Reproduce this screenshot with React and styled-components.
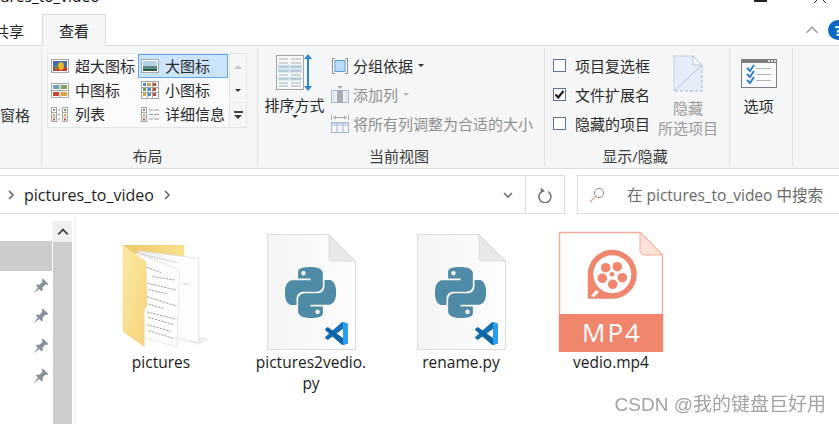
import React from 'react';
import styled, { createGlobalStyle } from 'styled-components';
import { SiPython } from 'react-icons/si';

const GlobalStyle = createGlobalStyle`
  html, body {
    margin: 0;
    padding: 0;
    background: #fff;
  }
  * {
    box-sizing: border-box;
  }
`;

const UI_FONT = `"Open Sans", "Noto Sans CJK SC", sans-serif`;

const Page = styled.div`
  position: relative;
  width: 839px;
  height: 424px;
  overflow: hidden;
  background: #fff;
  color: #222;
  font-family: ${UI_FONT};
  font-size: 15px;
`;

const TitleBar = styled.div`
  display: flex;
  justify-content: space-between;
  height: 14px;
  overflow: hidden;
  font-size: 15.5px;
  line-height: 14px;
  color: #111;
`;

const TitleText = styled.div`
  margin-top: -11px;
`;

const WindowGlyphs = styled.div`
  display: flex;
  align-items: flex-start;
  gap: 46px;
  padding-right: 12px;
`;

const RestoreEdge = styled.span`
  width: 13px;
  height: 2px;
  background: #222;
`;

const TabBar = styled.div`
  display: flex;
  align-items: stretch;
  height: 32px;
  margin-bottom: -1px;
`;

const Tab = styled.div`
  position: relative;
  z-index: 1;
  display: flex;
  flex: none;
  align-items: center;
  justify-content: center;
  width: ${(p) => p.$width}px;
  margin-left: ${(p) => p.$left || 0}px;
  background: ${(p) => (p.$active ? '#f5f6f7' : 'transparent')};
  border: 1px solid ${(p) => (p.$active ? '#d9dadb' : 'transparent')};
  border-bottom: none;
`;

const TabTools = styled.div`
  display: flex;
  align-items: center;
  gap: 9px;
  margin-left: auto;
  margin-right: -9px;
`;

const HelpBadge = styled.div`
  display: flex;
  align-items: center;
  justify-content: center;
  width: 20px;
  height: 20px;
  border-radius: 50%;
  background: #0b69c0;
  color: #fff;
  font-size: 14px;
  font-weight: 700;
`;

const Ribbon = styled.div`
  display: flex;
  height: 124px;
  padding: 2px 0;
  background: #f5f6f7;
  border-top: 1px solid #d9dadb;
  border-bottom: 1px solid #d9dadb;
`;

const Group = styled.div`
  display: flex;
  flex-direction: column;
  width: ${(p) => p.$width}px;
  border-right: 1px solid #dfe1e3;
`;

const GroupBody = styled.div`
  display: flex;
  flex: 1;
  min-height: 0;
  padding: ${(p) => p.$padding || '0'};
  gap: ${(p) => p.$gap || 0}px;
`;

const GroupLabel = styled.div`
  height: 24px;
  padding-right: 4px;
  line-height: 28px;
  text-align: center;
  color: #3c3c3c;
`;

const PaneLabel = styled.div`
  align-self: flex-start;
  margin: 57px 0 0 0;
  line-height: 20px;
  color: #333;
`;

const Gallery = styled.div`
  display: flex;
  width: 200px;
  height: 75px;
  border: 1px solid #e3e5e8;
  background: #f5f6f7;
`;

const GalleryGrid = styled.div`
  display: grid;
  grid-template-columns: 90px 90px;
  grid-template-rows: repeat(3, 24px);
  width: 182px;
  height: 74px;
  background: #f9fafc;
  border-right: 1px solid #e3e5e8;
  border-bottom: 1px solid #e3e5e8;
`;

const GalleryCell = styled.div`
  display: flex;
  align-items: center;
  gap: 6px;
  padding-left: 2px;
  line-height: 20px;
  white-space: nowrap;
  color: #2b2b2b;
  border: 1px solid ${(p) => (p.$selected ? '#66a7e8' : 'transparent')};
  background: ${(p) => (p.$selected ? '#cce4fb' : 'transparent')};
`;

const GalleryScroll = styled.div`
  display: flex;
  flex: 1;
  flex-direction: column;
`;

const ScrollStep = styled.div`
  display: flex;
  flex-direction: column;
  align-items: center;
  justify-content: center;
  gap: 2px;
  height: 24px;
  border-top: 1px solid ${(p) => (p.$split ? '#e9ebee' : 'transparent')};
`;

const Triangle = styled.span`
  width: 0;
  height: 0;
  border-left: ${(p) => p.$size || 3}px solid transparent;
  border-right: ${(p) => p.$size || 3}px solid transparent;
  border-${(p) => (p.$up ? 'bottom' : 'top')}: ${(p) => p.$size || 3}px solid ${(p) => p.$color || '#333'};
  margin-left: ${(p) => p.$left || 0}px;
`;

const Bar = styled.span`
  width: 9px;
  height: 2px;
  background: #444;
`;

const BigButton = styled.div`
  display: flex;
  flex-direction: column;
  align-items: center;
  width: ${(p) => p.$width}px;
  padding-top: ${(p) => p.$top}px;
  color: ${(p) => (p.$muted ? '#9a9a9a' : '#2b2b2b')};
  line-height: 20px;
`;

const BigLabel = styled.div`
  margin-top: ${(p) => p.$gap || 0}px;
  text-align: center;
  white-space: nowrap;
`;

const Stack = styled.div`
  display: flex;
  flex-direction: column;
  padding-top: ${(p) => p.$top}px;
`;

const ActionRow = styled.div`
  display: flex;
  align-items: center;
  gap: ${(p) => p.$gap || 4}px;
  height: 29px;
  white-space: nowrap;
  color: ${(p) => (p.$muted ? '#8f8f8f' : '#2b2b2b')};
`;

const CheckBox = styled.span`
  display: flex;
  align-items: center;
  justify-content: center;
  width: 13px;
  height: 13px;
  background: #fff;
  border: 1px solid #5f7297;
`;

const AddressRow = styled.div`
  display: flex;
  height: 39px;
  margin-top: 6px;
`;

const AddressBox = styled.div`
  display: flex;
  flex: none;
  align-items: center;
  width: 565px;
  border: 1px solid #dcdcdc;
  border-left: none;
`;

const Crumbs = styled.div`
  display: flex;
  align-items: center;
  flex: 1;
  gap: 8px;
  padding-left: 6px;
  font-size: 16px;
  color: #1e1e1e;
`;

const DropArea = styled.div`
  display: flex;
  align-items: center;
  padding-right: 12px;
  height: 100%;
  border-right: 1px solid #dcdcdc;
`;

const RefreshArea = styled.div`
  display: flex;
  align-items: center;
  justify-content: center;
  width: 38px;
`;

const SearchBox = styled.div`
  display: flex;
  flex: none;
  align-items: center;
  gap: 22px;
  width: 270px;
  margin-left: 12px;
  padding-left: 11px;
  border: 1px solid #dcdcdc;
  color: #6a6a6a;
  font-size: 15.5px;
  white-space: nowrap;
`;

const Main = styled.div`
  display: flex;
  height: 210px;
`;

const Sidebar = styled.div`
  display: flex;
  flex: none;
  width: 72px;
  gap: 1px;
`;

const NavList = styled.div`
  width: 52px;
  padding-top: 27px;
`;

const NavRow = styled.div`
  display: flex;
  align-items: center;
  justify-content: flex-end;
  height: 30px;
  padding-right: 3px;
  background: ${(p) => (p.$active ? '#cccccc' : 'transparent')};
`;

const ScrollTrack = styled.div`
  width: 19px;
  margin-top: 7px;
  background: #cdcdcd;
`;

const ScrollTop = styled.div`
  display: flex;
  align-items: center;
  justify-content: center;
  height: 21px;
  background: #f0f0f0;
`;

const Files = styled.div`
  display: flex;
  flex: 1;
  padding: 16px 0 0 26px;
  gap: 32px;
  border-left: 1px solid #f2f2f2;
  margin-left: 3px;
`;

const FileItem = styled.div`
  display: flex;
  flex-direction: column;
  align-items: center;
  flex: none;
  width: 118px;
`;

const FileThumb = styled.div`
  display: flex;
  justify-content: center;
  height: 120px;
`;

const FileName = styled.div`
  margin-top: 2px;
  width: 118px;
  font-size: 15.5px;
  line-height: 21px;
  text-align: center;
  overflow-wrap: anywhere;
  color: #1c1c1c;
`;

const Watermark = styled.div`
  position: absolute;
  right: 13px;
  bottom: 7px;
  font-family: "Liberation Sans", "Noto Sans CJK SC", sans-serif;
  font-size: 19px;
  line-height: 24px;
  color: #a3a3a3;
  filter: blur(0.3px);
`;

function Chevron({ dir = 'right', size = 10, color = '#666', stroke = 1.6 }) {
  const points = {
    right: '3,1 7,5 3,9',
    down: '1,3 5,7 9,3',
    up: '1,7 5,3 9,7',
  }[dir];
  return (
    <svg width={size} height={size} viewBox="0 0 10 10">
      <polyline points={points} fill="none" stroke={color} strokeWidth={stroke} />
    </svg>
  );
}

function CloseLegs() {
  return (
    <svg width="14" height="3" viewBox="0 0 14 3">
      <line x1="4" y1="0" x2="1" y2="3" stroke="#222" />
      <line x1="10" y1="0" x2="13" y2="3" stroke="#222" />
    </svg>
  );
}

function Tiles({ cols, rows, size, gap, x = 0, y = 0 }) {
  const colors = ['#4a90c8', '#d9a63c', '#c8483a', '#5a9e5a', '#4a90c8', '#c8483a', '#d9a63c', '#4a90c8', '#c8483a'];
  const out = [];
  for (let r = 0; r < rows; r += 1) {
    for (let c = 0; c < cols; c += 1) {
      out.push(
        <rect
          key={`${r}-${c}`}
          x={x + c * (size + gap)}
          y={y + r * (size + gap)}
          width={size}
          height={size}
          fill={colors[(r * cols + c) % colors.length]}
        />,
      );
    }
  }
  return out;
}

function ExtraLargeIcon() {
  return (
    <svg width="18" height="14" viewBox="0 0 18 14">
      <rect x="0.5" y="0.5" width="17" height="13" fill="#fff" stroke="#a8a8a8" />
      <rect x="2" y="2" width="14" height="10" fill="#3d6fb0" />
      <rect x="2" y="8" width="14" height="4" fill="#c63b2c" />
      <ellipse cx="10" cy="7" rx="3" ry="4" fill="#e5b52e" />
      <rect x="4" y="6" width="2" height="5" fill="#5a9e3a" />
    </svg>
  );
}

function LargeIcon() {
  return (
    <svg width="18" height="14" viewBox="0 0 18 14">
      <rect x="0.5" y="0.5" width="17" height="13" fill="#fff" stroke="#a8a8a8" />
      <rect x="2" y="2" width="14" height="5" fill="#b5d3e8" />
      <rect x="2" y="7" width="14" height="3" fill="#5f8a7e" />
      <rect x="2" y="10" width="14" height="2" fill="#2f5a4e" />
    </svg>
  );
}

function MediumIcon() {
  return (
    <svg width="18" height="15" viewBox="0 0 18 15">
      <rect x="0.5" y="0.5" width="17" height="14" fill="#fff" stroke="#a8a8a8" />
      <line x1="9" y1="1" x2="9" y2="14" stroke="#a8a8a8" />
      <line x1="1" y1="7.5" x2="17" y2="7.5" stroke="#a8a8a8" />
      <rect x="2" y="2" width="6" height="4" fill="#6ea2c4" />
      <rect x="10" y="2" width="6" height="4" fill="#7ea35a" />
      <rect x="2" y="9" width="6" height="4" fill="#c8483a" />
      <rect x="10" y="9" width="6" height="4" fill="#d9a63c" />
    </svg>
  );
}

function SmallIcon() {
  return (
    <svg width="18" height="18" viewBox="0 0 18 18">
      <rect x="0.5" y="0.5" width="17" height="17" fill="#fff" stroke="#a8a8a8" />
      <line x1="6.5" y1="1" x2="6.5" y2="17" stroke="#a8a8a8" />
      <line x1="11.5" y1="1" x2="11.5" y2="17" stroke="#a8a8a8" />
      <line x1="1" y1="6.5" x2="17" y2="6.5" stroke="#a8a8a8" />
      <line x1="1" y1="11.5" x2="17" y2="11.5" stroke="#a8a8a8" />
      <Tiles cols={3} rows={3} size={3} gap={2} x={2} y={2} />
    </svg>
  );
}

function ListIcon() {
  return (
    <svg width="18" height="15" viewBox="0 0 18 15">
      {[0, 11].map((x) => (
        <g key={x}>
          <rect x={x + 0.5} y="0.5" width="5" height="14" fill="#fff" stroke="#a8a8a8" />
          <line x1={x} y1="5.5" x2={x + 6} y2="5.5" stroke="#a8a8a8" />
          <line x1={x} y1="10" x2={x + 6} y2="10" stroke="#a8a8a8" />
          <rect x={x + 2} y="2" width="2" height="2" fill="#6e9e5a" />
          <rect x={x + 2} y="7" width="2" height="2" fill="#d9a63c" />
          <rect x={x + 2} y="11.5" width="2" height="2" fill="#c8483a" />
          <line x1={x + 7} y1="3" x2={x + 9} y2="3" stroke="#999" />
          <line x1={x + 7} y1="7.5" x2={x + 9} y2="7.5" stroke="#999" />
          <line x1={x + 7} y1="12" x2={x + 9} y2="12" stroke="#999" />
        </g>
      ))}
    </svg>
  );
}

function DetailIcon() {
  return (
    <svg width="18" height="15" viewBox="0 0 18 15">
      <rect x="0.5" y="0.5" width="5" height="14" fill="#fff" stroke="#a8a8a8" />
      <line x1="0" y1="5.5" x2="6" y2="5.5" stroke="#a8a8a8" />
      <line x1="0" y1="10" x2="6" y2="10" stroke="#a8a8a8" />
      <rect x="2" y="2" width="2" height="2" fill="#6e9e5a" />
      <rect x="2" y="7" width="2" height="2" fill="#d9a63c" />
      <rect x="2" y="11.5" width="2" height="2" fill="#c8483a" />
      {[3, 7.5, 12].map((y) => (
        <g key={y}>
          <line x1="8" y1={y} x2="12" y2={y} stroke="#999" />
          <line x1="13" y1={y} x2="18" y2={y} stroke="#999" />
        </g>
      ))}
    </svg>
  );
}

function SortIcon() {
  return (
    <svg width="38" height="37" viewBox="0 0 38 37">
      <rect x="0.5" y="1.5" width="27" height="34" fill="#f4f6f7" stroke="#a5a5a5" />
      {[5, 9, 13, 17, 21, 25, 29, 32].map((y, i) => (
        <g key={y}>
          <rect x="2" y={y - 2} width="24" height="3.5" fill={i === 2 || i === 3 || i === 5 ? '#c6e0ee' : 'transparent'} />
          <line x1="3" y1={y} x2="12" y2={y} stroke="#a9b4ba" />
          <line x1="15" y1={y} x2="25" y2={y} stroke="#a9b4ba" />
        </g>
      ))}
      <rect x="31" y="3" width="2" height="31" fill="#2f86cf" />
      <polygon points="32,0 36,5 28,5" fill="#2f86cf" />
      <polygon points="32,37 36,32 28,32" fill="#2f86cf" />
    </svg>
  );
}

function GroupByIcon() {
  return (
    <svg width="18" height="16" viewBox="-1 0 18 16">
      <path d="M3 .5H.5v15H3M13 .5h2.5v15H13" fill="none" stroke="#8f8f8f" />
      <rect x="3" y="2.5" width="10" height="11" fill="#b9dcfb" stroke="#5f9bd3" />
    </svg>
  );
}

function AddColumnIcon() {
  return (
    <svg width="18" height="17" viewBox="0 0 18 17">
      <rect x="0.5" y="4.5" width="17" height="12" fill="#eef2f8" stroke="#a9b7d1" />
      <rect x="6" y="4" width="6" height="13" fill="#a8acb3" />
      <polygon points="6.5,0 11.5,0 9,3" fill="#a0a4ab" />
      <line x1="3" y1="5" x2="3" y2="16" stroke="#d4dbe8" />
      <line x1="15" y1="5" x2="15" y2="16" stroke="#d4dbe8" />
    </svg>
  );
}

function FitColumnsIcon() {
  return (
    <svg width="18" height="18" viewBox="0 0 18 18">
      <line x1="0.5" y1="0" x2="0.5" y2="5" stroke="#a9a9a9" />
      <line x1="17.5" y1="0" x2="17.5" y2="5" stroke="#a9a9a9" />
      <line x1="2" y1="2.5" x2="16" y2="2.5" stroke="#a9a9a9" />
      <polygon points="2,2.5 5,0.5 5,4.5" fill="#a9a9a9" />
      <polygon points="16,2.5 13,0.5 13,4.5" fill="#a9a9a9" />
      <rect x="0.5" y="7.5" width="17" height="10" fill="#f3f5f9" stroke="#a9b7d1" />
      <rect x="1" y="8" width="16" height="3" fill="#cfd9ea" />
      <line x1="6" y1="8" x2="6" y2="17" stroke="#a9b7d1" />
      <line x1="12" y1="8" x2="12" y2="17" stroke="#a9b7d1" />
    </svg>
  );
}

function HideFileIcon() {
  return (
    <svg width="30" height="37" viewBox="0 0 30 37">
      <polygon points="1,1 20,1 29,10 29,36 1,36" fill="#e6edf8" />
      <path d="M1 36V1h19l9 9" fill="none" stroke="#c7cedb" />
      <path d="M29 10v26H1" fill="none" stroke="#a9b2c6" strokeDasharray="3 2" />
      <polygon points="20,1 29,10 20,10" fill="#f5f6f7" stroke="#bcc5d6" />
      <line x1="1" y1="36" x2="29" y2="10" stroke="#b9c3d6" />
    </svg>
  );
}

function OptionsIcon() {
  return (
    <svg width="36" height="29" viewBox="0 0 36 29">
      <rect x="0.5" y="0.5" width="35" height="28" fill="#f8fafc" stroke="#7d7d7d" />
      <rect x="0" y="0" width="36" height="4" fill="#7d7d7d" />
      <rect x="27" y="1" width="2" height="2" fill="#ddd" />
      <rect x="30" y="1" width="2" height="2" fill="#ddd" />
      <rect x="33" y="1" width="2" height="2" fill="#ddd" />
      {[8, 14, 20].map((y) => (
        <g key={y}>
          <polyline points={`6,${y + 1} 9,${y + 4} 13,${y - 2}`} fill="none" stroke="#2f7fd0" strokeWidth="2" />
          <line x1="15" y1={y + 1.5} x2="30" y2={y + 1.5} stroke="#b5b5b5" />
        </g>
      ))}
    </svg>
  );
}

function CheckMark() {
  return (
    <svg width="11" height="11" viewBox="0 0 11 11">
      <polyline points="1.5,5.5 4.2,8.5 9.5,2" fill="none" stroke="#1f1f1f" strokeWidth="2.2" />
    </svg>
  );
}

function PinIcon() {
  return (
    <svg width="16" height="16" viewBox="0 0 14 14">
      <path d="M8.5 0.5 13.5 5.2 12.2 6.2 11 5.6 8.4 8.4 8.6 10.8 7.4 11.6 2.6 6.7 3.4 5.6 5.8 5.8 8.4 3.2 7.6 1.8Z" fill="#87919a" />
      <path d="M4.4 8.4 0.4 13.4 5.5 9.6Z" fill="#87919a" />
    </svg>
  );
}

function RefreshIcon() {
  return (
    <svg width="16" height="16" viewBox="0 0 16 16">
      <path d="M5 3.4A6 6 0 1 0 11.2 3.6" fill="none" stroke="#6e6e6e" strokeWidth="1.5" transform="translate(0 1)" />
      <polygon points="4,0.8 8,4.2 3.5,5.8" fill="#6e6e6e" />
    </svg>
  );
}

function SearchIcon() {
  return (
    <svg width="16" height="16" viewBox="0 0 16 16">
      <circle cx="10" cy="6" r="4.6" fill="none" stroke="#8d8d8d" />
      <line x1="6.6" y1="9.4" x2="1" y2="15" stroke="#c9a183" strokeWidth="1.2" />
    </svg>
  );
}

const paperLines = [
  [108, 112, 150, 128], [125, 140, 190, 150], [110, 160, 196, 180], [112, 178, 170, 192],
  [108, 200, 196, 228], [112, 222, 160, 236], [108, 246, 196, 268], [112, 262, 188, 284],
  [108, 284, 180, 304], [112, 302, 190, 326],
];

function FolderThumb() {
  return (
    <svg width="100" height="120" viewBox="0 0 300 360">
      <defs>
        <linearGradient id="folderBack" x1="0" x2="1" y1="0" y2="0">
          <stop offset="0" stopColor="#ecc568" />
          <stop offset="1" stopColor="#fbe08e" />
        </linearGradient>
        <linearGradient id="folderFront" x1="0" x2="1" y1="0" y2="1">
          <stop offset="0" stopColor="#fde9a4" />
          <stop offset="1" stopColor="#f5d27a" />
        </linearGradient>
        <linearGradient id="paperShade" x1="0" x2="1" y1="0" y2="0">
          <stop offset="0" stopColor="#e8e8e8" />
          <stop offset="0.5" stopColor="#fbfbfb" />
          <stop offset="1" stopColor="#ffffff" />
        </linearGradient>
      </defs>
      <polygon points="36,45 220,45 220,85 100,90 36,70" fill="url(#folderBack)" />
      <polygon points="200,325 265,345 295,325 262,320" fill="#f0f0f0" />
      <polygon points="80,62 263,85 263,338 200,325 150,200" fill="url(#paperShade)" stroke="#d6d6d6" strokeWidth="2" />
      <polygon points="72,68 205,120 198,352 96,320" fill="#fff" stroke="#dcdcdc" strokeWidth="2" />
      <line x1="90" y1="72" x2="200" y2="98" stroke="#a8a8a8" strokeWidth="2" strokeDasharray="5 3" />
      {paperLines.map(([x1, y1, x2, y2]) => (
        <line key={y1} x1={x1} y1={y1} x2={x2} y2={y2} stroke="#8a8a8a" strokeWidth="2.5" strokeDasharray="7 3" />
      ))}
      <line x1="215" y1="160" x2="235" y2="163" stroke="#bbb" strokeWidth="2" />
      <polygon points="36,45 105,95 108,228 100,240 100,350 36,305" fill="url(#folderFront)" stroke="#edcf82" strokeWidth="1" />
    </svg>
  );
}

function VsCodeMark({ x, y }) {
  return (
    <svg x={x} y={y} width="23" height="23" viewBox="0 0 100 100">
      <path d="M72 2 2 64c-2 2-2 5 0 7l6 5c2 2 5 2 7 0L100 14V12c0-3-2-6-5-7L79 0c-2-1-5 0-7 2Z" fill="#1470b3" />
      <path d="M72 98 2 36c-2-2-2-5 0-7l6-5c2-2 5-2 7 0l85 62v2c0 3-2 6-5 7l-16 5c-2 1-5 0-7-2Z" fill="#0d63a3" />
      <path d="M72 98c3 2 7 2 9 1l14-6c3-1 5-4 5-7V14c0-3-2-6-5-7L81 1c-2-1-6-1-9 1 3-1 6 1 6 5v86c0 4-3 6-6 5Z" fill="#2a9df0" />
    </svg>
  );
}

function PythonThumb() {
  return (
    <svg width="100" height="120" viewBox="0 0 100 120">
      <defs>
        <linearGradient id="sheet" x1="0" x2="1" y1="0" y2="0">
          <stop offset="0" stopColor="#f4f4f4" />
          <stop offset="1" stopColor="#fdfdfd" />
        </linearGradient>
      </defs>
      <polygon points="6.5,4.5 68,4.5 94.5,31 94.5,119.5 6.5,119.5" fill="url(#sheet)" stroke="#dcdcdc" />
      <polygon points="68,4.5 94.5,31 70,31 68,29" fill="#e8e8e8" stroke="#dcdcdc" />
      <SiPython x="24" y="37" size="51" color="#4f8ba6" />
      <VsCodeMark x={64} y={92} />
    </svg>
  );
}

function VideoThumb() {
  return (
    <svg width="110" height="122" viewBox="0 0 110 122">
      <polygon points="3.5,2.5 84,2.5 106.5,25 106.5,121.5 3.5,121.5" fill="#fff" stroke="#f4ad9b" strokeWidth="1.5" />
      <polygon points="84,2.5 106.5,25 87,25 84,22" fill="#fde3dc" stroke="#f4ad9b" />
      <rect x="3" y="84" width="104" height="38" fill="#f0866d" />
      <path d="M31.8 44.3A24.5 24.5 0 1 1 56.3 68.8H31.8Z" fill="#f0866d" />
      <circle cx="56.3" cy="44.3" r="19" fill="#fff" />
      <path d="M35 66 40 60 43 62 38 67Z" fill="#fff" />
      {[[49.7, 37.7], [61.3, 36.7], [66.3, 47.7], [56.7, 54.3], [46.3, 48.3]].map(([cx, cy]) => (
        <circle key={cx} cx={cx} cy={cy} r="4.8" fill="#f0866d" />
      ))}
      <circle cx="56" cy="44.3" r="2.4" fill="#f0866d" />
      <text x="56" y="112" textAnchor="middle" fontFamily='"Open Sans", sans-serif' fontSize="26" letterSpacing="2" fill="#fff">MP4</text>
    </svg>
  );
}

const files = [
  { name: 'pictures', Thumb: FolderThumb },
  { name: 'pictures2vedio.py', Thumb: PythonThumb },
  { name: 'rename.py', Thumb: PythonThumb },
  { name: 'vedio.mp4', Thumb: VideoThumb },
];

function App() {
  return (
    <Page>
      <GlobalStyle />
      <TitleBar>
        <TitleText>ures_to_video</TitleText>
        <WindowGlyphs>
          <RestoreEdge />
          <CloseLegs />
        </WindowGlyphs>
      </TitleBar>
      <TabBar>
        <Tab $width={32} $left={-7}>共享</Tab>
        <Tab $active $width={64} $left={17}>查看</Tab>
        <TabTools>
          <Chevron dir="up" size={14} color="#9a9a9a" stroke={1} />
          <HelpBadge>?</HelpBadge>
        </TabTools>
      </TabBar>
      <Ribbon>
        <Group $width={42}>
          <GroupBody><PaneLabel>窗格</PaneLabel></GroupBody>
        </Group>
        <Group $width={216}>
          <GroupBody $padding="5px 0 0 5px">
            <Gallery>
              <GalleryGrid>
                <GalleryCell><ExtraLargeIcon />超大图标</GalleryCell>
                <GalleryCell $selected><LargeIcon />大图标</GalleryCell>
                <GalleryCell><MediumIcon />中图标</GalleryCell>
                <GalleryCell><SmallIcon />小图标</GalleryCell>
                <GalleryCell><ListIcon />列表</GalleryCell>
                <GalleryCell><DetailIcon />详细信息</GalleryCell>
              </GalleryGrid>
              <GalleryScroll>
                <ScrollStep><Triangle $up $size={4} $color="#c4c8cc" /></ScrollStep>
                <ScrollStep><Triangle $size={3} /></ScrollStep>
                <ScrollStep $split>
                  <Bar />
                  <Triangle $size={4} />
                </ScrollStep>
              </GalleryScroll>
            </Gallery>
          </GroupBody>
          <GroupLabel>布局</GroupLabel>
        </Group>
        <Group $width={287}>
          <GroupBody $padding="0 0 0 5px" $gap={5}>
            <BigButton $width={63} $top={6}>
              <SortIcon />
              <BigLabel $gap={4}>排序方式</BigLabel>
              <Triangle $size={3} />
            </BigButton>
            <Stack $top={3}>
              <ActionRow>
                <GroupByIcon />
                分组依据
                <Triangle $size={3} $left={1} />
              </ActionRow>
              <ActionRow $muted>
                <AddColumnIcon />
                添加列
                <Triangle $size={3} $left={1} $color="#b5b5b5" />
              </ActionRow>
              <ActionRow $muted>
                <FitColumnsIcon />
                将所有列调整为合适的大小
              </ActionRow>
            </Stack>
          </GroupBody>
          <GroupLabel>当前视图</GroupLabel>
        </Group>
        <Group $width={185}>
          <GroupBody $padding="0 0 0 8px" $gap={8}>
            <Stack $top={3}>
              <ActionRow $gap={9}><CheckBox />项目复选框</ActionRow>
              <ActionRow $gap={9}><CheckBox><CheckMark /></CheckBox>文件扩展名</ActionRow>
              <ActionRow $gap={9}><CheckBox />隐藏的项目</ActionRow>
            </Stack>
            <BigButton $muted $width={60} $top={7}>
              <HideFileIcon />
              <BigLabel $gap={6}>隐藏<br />所选项目</BigLabel>
            </BigButton>
          </GroupBody>
          <GroupLabel>显示/隐藏</GroupLabel>
        </Group>
        <Group $width={63}>
          <GroupBody>
            <BigButton $width={57} $top={11}>
              <OptionsIcon />
              <BigLabel $gap={8}>选项</BigLabel>
            </BigButton>
          </GroupBody>
        </Group>
      </Ribbon>
      <AddressRow>
        <AddressBox>
          <Crumbs>
            <Chevron />
            pictures_to_video
            <Chevron />
          </Crumbs>
          <DropArea><Chevron dir="down" color="#707070" /></DropArea>
          <RefreshArea><RefreshIcon /></RefreshArea>
        </AddressBox>
        <SearchBox>
          <SearchIcon />
          在 pictures_to_video 中搜索
        </SearchBox>
      </AddressRow>
      <Main>
        <Sidebar>
          <NavList>
            <NavRow $active />
            <NavRow><PinIcon /></NavRow>
            <NavRow><PinIcon /></NavRow>
            <NavRow><PinIcon /></NavRow>
            <NavRow><PinIcon /></NavRow>
          </NavList>
          <ScrollTrack>
            <ScrollTop><Chevron dir="up" size={12} color="#444" stroke={1.5} /></ScrollTop>
          </ScrollTrack>
        </Sidebar>
        <Files>
          {files.map(({ name, Thumb }) => (
            <FileItem key={name}>
              <FileThumb><Thumb /></FileThumb>
              <FileName>{name}</FileName>
            </FileItem>
          ))}
        </Files>
      </Main>
      <Watermark>CSDN @我的键盘巨好用</Watermark>
    </Page>
  );
}

export default App;
